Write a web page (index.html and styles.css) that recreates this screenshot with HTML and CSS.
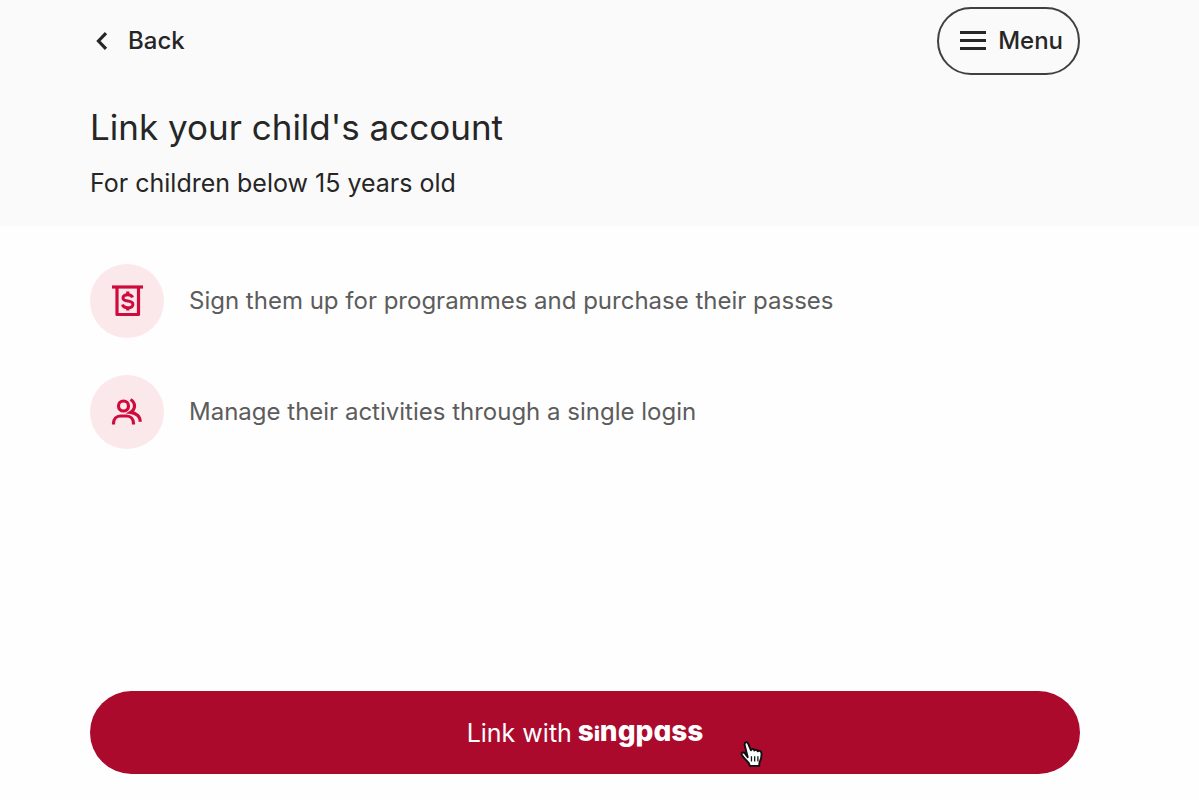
FILE: index.html
```
<!DOCTYPE html>
<html lang="en">
<head>
    <meta charset="UTF-8">
    <meta name="viewport" content="width=device-width, initial-scale=1.0">
    <title>Link your child's account</title>
    <link rel="stylesheet" href="styles.css">
</head>
<body>

<header class="header">
    <nav class="topbar">
        <a class="back" href="#">
            <svg width="22" height="24" viewBox="0 0 22 24" fill="none" stroke="currentColor" stroke-width="3.200">
                <path d="M16 4.200L8.500 12l7.500 7.800"/>
            </svg>
            Back
        </a>
        <button class="menu" type="button">
            <svg width="26" height="20" viewBox="0 0 26 20" fill="currentColor">
                <path d="M0 0h26v3H0zM0 8h26v3H0zM0 16h26v3H0z"/>
            </svg>
            Menu
        </button>
    </nav>
    <h1>Link your child's account</h1>
    <p class="subtitle">For children below 15 years old</p>
</header>

<main class="content">
    <ul class="benefits">
        <li>
            <span class="icon">
                <svg width="74" height="74" viewBox="0 0 74 74" fill="none" stroke="currentColor">
                    <path d="M22 23h31" stroke-width="3.200"/>
                    <path d="M27 23v27.500h21.500V23" stroke-width="3.200" stroke-linejoin="round"/>
                    <path d="M42.500 33.500c-.5-1.900-2.200-2.700-4.700-2.700-3 0-4.800 1.300-4.800 3.200 0 4.600 9.900 1.600 9.900 6.200 0 2.200-2 3.500-5 3.500-2.900 0-4.800-1-5.400-3.200" stroke-width="3"/>
                    <path d="M37.800 27.500v3.500M37.800 43v3.500" stroke-width="3.200"/>
                </svg>
            </span>
            Sign them up for programmes and purchase their passes
        </li>
        <li>
            <span class="icon">
                <svg width="74" height="74" viewBox="0 0 74 74" fill="none" stroke="currentColor" stroke-width="3.200">
                    <circle cx="33.500" cy="31" r="5"/>
                    <path d="M23.500 49.500v-1c0-4.500 3-7.500 7-7.500h6c4 0 7 3 7 7.500v1"/>
                    <path d="M40.500 24.500c5.300 3.200 5.300 9.700 0 12.900 5.500.7 9.700 3.800 9.700 9.300"/>
                </svg>
            </span>
            Manage their activities through a single login
        </li>
    </ul>

    <button class="singpass-btn" type="button">
        <span>Link with</span>
        <span class="singpass">s<span class="short-i">i</span>ngpass</span>
        <svg class="cursor" width="26" height="30" viewBox="0 0 24 28">
            <path d="M8 17L5.300 6.200C4.500 3 7.300 1.700 8.500 4.500l2.500 6c.5-1.700 2.800-1.500 3.200.3.600-1.200 2.700-1 3.100.7.800-1.100 3.200-.5 3.500 1.600.5 4-.5 6.400-1.800 9l-.3 3H10l-1-2.500c-2-2.500-4.600-4.900-6.300-7.500-1.300-2.200 1-3.400 2.800-1.600z" fill="#fff" stroke="#111" stroke-width="1.800" stroke-linejoin="round"/>
            <path d="M11.500 16v5M14.500 16v5M17.500 16v5" stroke="#111" stroke-width="1.200"/>
        </svg>
    </button>
</main>

</body>
</html>
```
FILE: styles.css
```
* {
    box-sizing: border-box;
}
body {
    font-family: Inter, "Liberation Sans", sans-serif;
    font-size: 25px;
    line-height: 32px;
    margin: 0;
    min-height: 100vh;
    display: flex;
    flex-direction: column;
    background-color: #fefefe;
    color: #262626;
}
button {
    font: inherit;
    cursor: pointer;
}
.header {
    background-color: #fafafa;
    padding: 7px 119px 27px 90px;
}
.topbar {
    display: flex;
    justify-content: space-between;
    align-items: center;
}
.back {
    display: flex;
    align-items: center;
    gap: 16px;
    color: inherit;
    font-size: 24px;
    font-weight: 500;
    text-decoration: none;
}
.menu {
    display: flex;
    align-items: center;
    gap: 12px;
    height: 68px;
    padding: 0 15px 0 21px;
    background: none;
    border: 2px solid #404040;
    border-radius: 34px;
    color: inherit;
    font-size: 24px;
    font-weight: 500;
}
h1 {
    margin: 28px 0 16px;
    font-size: 35px;
    font-weight: 400;
    line-height: 48px;
}
.subtitle {
    margin: 0;
}
.content {
    flex: 1;
    display: flex;
    flex-direction: column;
    justify-content: space-between;
    padding: 38px 119px 26px 90px;
}
.benefits {
    list-style: none;
    margin: 0;
    padding: 0;
    display: grid;
    gap: 37px;
    color: #5c5c5c;
    font-size: 24px;
}
.benefits li {
    display: flex;
    align-items: center;
    gap: 25px;
}
.icon {
    width: 74px;
    height: 74px;
    border-radius: 50%;
    background-color: #fbe8ea;
    color: #cf0a3c;
}
.icon svg {
    display: block;
}
.singpass-btn {
    position: relative;
    display: flex;
    justify-content: center;
    align-items: center;
    gap: 6px;
    height: 83px;
    border: none;
    border-radius: 42px;
    background-color: #ab0a2d;
    color: white;
}
.singpass-btn:hover {
    background-color: #960826;
}
.singpass {
    font-size: 28px;
    font-weight: 800;
    font-feature-settings: "cv11";
}
.short-i {
    font-size: 20px;
    font-weight: 900;
}
/* pointer resting on the button */
.cursor {
    position: absolute;
    top: 48px;
    left: calc(50% + 154px);
}
```
